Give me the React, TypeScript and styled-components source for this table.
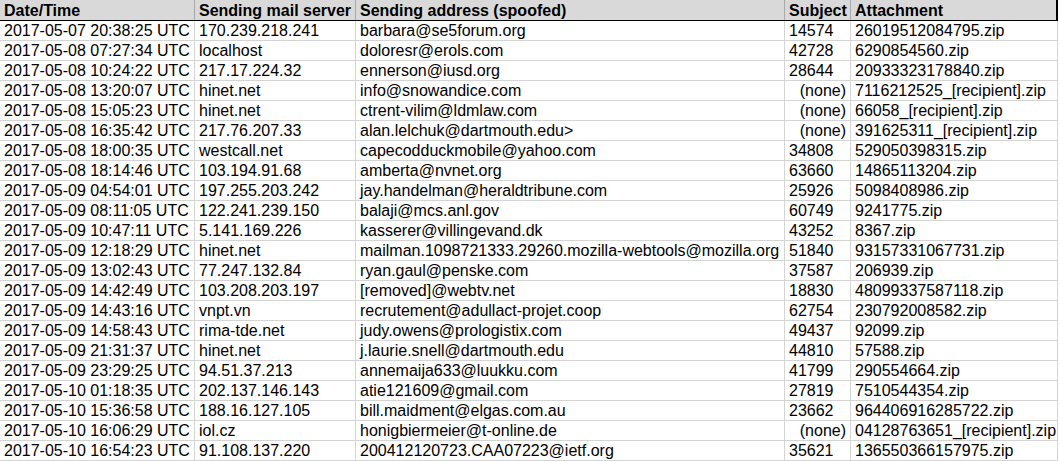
import React from 'react';
import styled, { createGlobalStyle } from 'styled-components';

const GlobalStyle = createGlobalStyle`
  html, body {
    margin: 0;
    padding: 0;
    background: #ffffff;
  }
  body {
    font-family: "Liberation Sans", Arial, sans-serif;
    color: #000;
  }
`;

type Row = [string, string, string, string, string];

const rows: Row[] = [
  ['2017-05-07 20:38:25 UTC', '170.239.218.241', 'barbara@se5forum.org', '14574', '26019512084795.zip'],
  ['2017-05-08 07:27:34 UTC', 'localhost', 'doloresr@erols.com', '42728', '6290854560.zip'],
  ['2017-05-08 10:24:22 UTC', '217.17.224.32', 'ennerson@iusd.org', '28644', '20933323178840.zip'],
  ['2017-05-08 13:20:07 UTC', 'hinet.net', 'info@snowandice.com', '(none)', '7116212525_[recipient].zip'],
  ['2017-05-08 15:05:23 UTC', 'hinet.net', 'ctrent-vilim@ldmlaw.com', '(none)', '66058_[recipient].zip'],
  ['2017-05-08 16:35:42 UTC', '217.76.207.33', 'alan.lelchuk@dartmouth.edu>', '(none)', '391625311_[recipient].zip'],
  ['2017-05-08 18:00:35 UTC', 'westcall.net', 'capecodduckmobile@yahoo.com', '34808', '529050398315.zip'],
  ['2017-05-08 18:14:46 UTC', '103.194.91.68', 'amberta@nvnet.org', '63660', '14865113204.zip'],
  ['2017-05-09 04:54:01 UTC', '197.255.203.242', 'jay.handelman@heraldtribune.com', '25926', '5098408986.zip'],
  ['2017-05-09 08:11:05 UTC', '122.241.239.150', 'balaji@mcs.anl.gov', '60749', '9241775.zip'],
  ['2017-05-09 10:47:11 UTC', '5.141.169.226', 'kasserer@villingevand.dk', '43252', '8367.zip'],
  ['2017-05-09 12:18:29 UTC', 'hinet.net', 'mailman.1098721333.29260.mozilla-webtools@mozilla.org', '51840', '93157331067731.zip'],
  ['2017-05-09 13:02:43 UTC', '77.247.132.84', 'ryan.gaul@penske.com', '37587', '206939.zip'],
  ['2017-05-09 14:42:49 UTC', '103.208.203.197', '[removed]@webtv.net', '18830', '48099337587118.zip'],
  ['2017-05-09 14:43:16 UTC', 'vnpt.vn', 'recrutement@adullact-projet.coop', '62754', '230792008582.zip'],
  ['2017-05-09 14:58:43 UTC', 'rima-tde.net', 'judy.owens@prologistix.com', '49437', '92099.zip'],
  ['2017-05-09 21:31:37 UTC', 'hinet.net', 'j.laurie.snell@dartmouth.edu', '44810', '57588.zip'],
  ['2017-05-09 23:29:25 UTC', '94.51.37.213', 'annemaija633@luukku.com', '41799', '290554664.zip'],
  ['2017-05-10 01:18:35 UTC', '202.137.146.143', 'atie121609@gmail.com', '27819', '7510544354.zip'],
  ['2017-05-10 15:36:58 UTC', '188.16.127.105', 'bill.maidment@elgas.com.au', '23662', '964406916285722.zip'],
  ['2017-05-10 16:06:29 UTC', 'iol.cz', 'honigbiermeier@t-online.de', '(none)', '04128763651_[recipient].zip'],
  ['2017-05-10 16:54:23 UTC', '91.108.137.220', '200412120723.CAA07223@ietf.org', '35621', '136550366157975.zip'],
];

const headers = ['Date/Time', 'Sending mail server', 'Sending address (spoofed)', 'Subject', 'Attachment'];

const Sheet = styled.div`
  width: 1058px;
  display: flex;
  flex-direction: column;
  font-size: 16px;
`;

const HeaderRow = styled.div`
  display: grid;
  grid-template-columns: 195px 161px 429px 66px 207px;
  height: 21px;
  background: #d9d9d9;
  border-bottom: 1px solid #000;
  box-sizing: border-box;
`;

const HeaderCell = styled.div<{ $last?: boolean }>`
  box-sizing: border-box;
  padding: 1px 4px 0 4px;
  line-height: 19px;
  font-weight: bold;
  white-space: nowrap;
  overflow: hidden;
  border-right: ${(p) => (p.$last ? '2px solid #000' : '1px solid #a9a9a9')};
`;

const DataRow = styled.div`
  display: grid;
  grid-template-columns: 195px 161px 429px 66px 207px;
  height: 20px;
  border-bottom: 1px solid #d4d4d4;
  box-sizing: border-box;
`;

const Cell = styled.div<{ $right?: boolean }>`
  box-sizing: border-box;
  padding: 0 4px;
  line-height: 19px;
  white-space: nowrap;
  overflow: hidden;
  text-align: ${(p) => (p.$right ? 'right' : 'left')};
  border-right: 1px solid #d4d4d4;
`;

export default function App() {
  return (
    <>
      <GlobalStyle />
      <Sheet>
        <HeaderRow>
          {headers.map((h, i) => (
            <HeaderCell key={h} $last={i === headers.length - 1}>
              {h}
            </HeaderCell>
          ))}
        </HeaderRow>
        {rows.map((r) => (
          <DataRow key={r[0]}>
            {r.map((v, i) => (
              <Cell key={i} $right={i === 3 && v === '(none)'}>
                {v}
              </Cell>
            ))}
          </DataRow>
        ))}
      </Sheet>
    </>
  );
}
